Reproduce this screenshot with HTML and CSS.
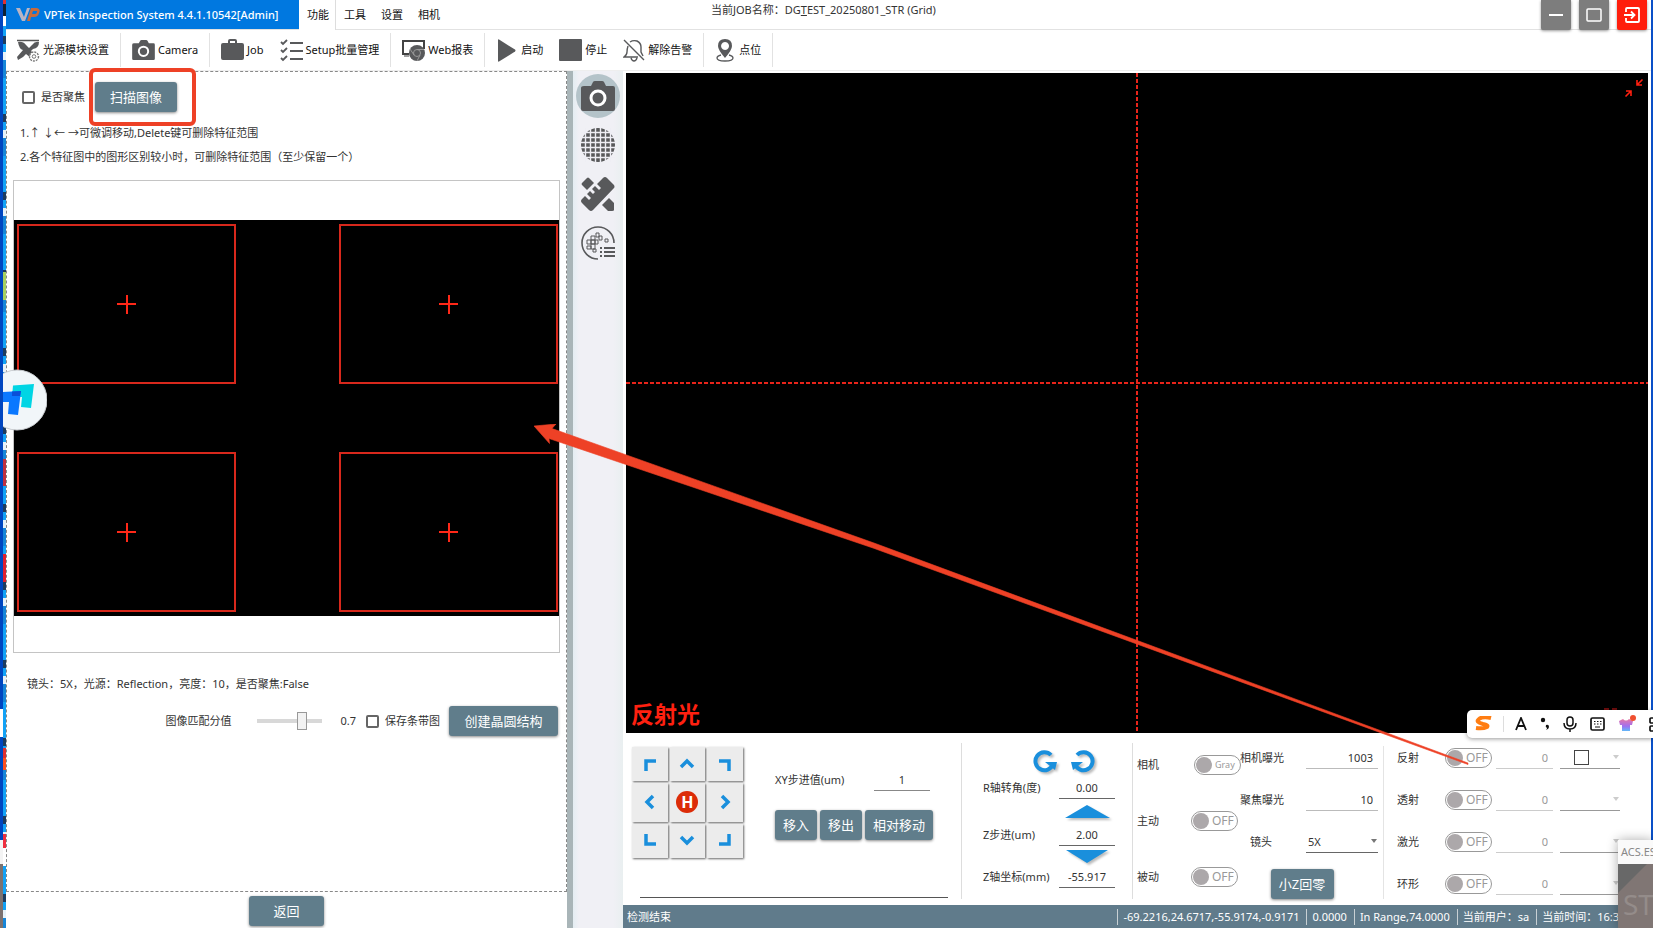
FILE: index.html
```html
<!DOCTYPE html>
<html lang="zh-CN">
<head>
<meta charset="utf-8">
<title>VPTek Inspection System</title>
<link rel="stylesheet" href="styles.css">
</head>
<body>
<svg width="0" height="0" class="defs" aria-hidden="true">
  <symbol id="i-cam" viewBox="0 0 34 30"><path d="M3 5h7l2-4q.5-1 2-1h7q1.500 0 2 1l2 4h7q2 0 2 2v21q0 2-2 2H2q-2 0-2-2V7q0-2 3-2z" fill="#58595b"/><circle cx="17" cy="17" r="7" fill="#58595b" stroke="#fff" stroke-width="3"/></symbol>
  <symbol id="i-rot" viewBox="0 0 26 26"><path d="M19 6A9 9 0 1 0 21 15" fill="none" stroke="#1a8fdc" stroke-width="4"/><path d="M13 13h12l-2 8z" fill="#1a8fdc"/></symbol>
</svg>

<div class="desktop">
  <div class="edge edge-left"></div>
  <div class="app">
    <header class="titlebar">
      <div class="brand">
        <svg width="24" height="15" viewBox="0 0 24 15"><path d="M0 1h4l4 9 3-9h3L9 14H6z" fill="#b9b4c4"/><path d="M11 14l4-13h6q4 1 2 5-1 4-5 4h-3l-1 4zM16 7h3q2 0 2-3h-4z" fill="#c86a3c" fill-rule="evenodd"/></svg>
        <span>VPTek Inspection System 4.4.1.10542[Admin]</span>
      </div>
      <nav class="tabs">
        <a href="#" class="tab active">功能</a><a href="#" class="tab">工具</a><a href="#" class="tab">设置</a><a href="#" class="tab">相机</a>
      </nav>
      <p class="job">当前JOB名称：DG<u>T</u>EST_20250801_STR (Grid)</p>
      <div class="winbtns">
        <button class="win" aria-label="最小化"><svg width="18" height="18" viewBox="0 0 18 18"><path d="M2 9h14" stroke="#fff" stroke-width="2"/></svg></button>
        <button class="win" aria-label="最大化"><svg width="18" height="18" viewBox="0 0 18 18"><rect x="2" y="3" width="14" height="12" rx="1" fill="none" stroke="#fff" stroke-width="1.500"/></svg></button>
        <button class="win exit" aria-label="退出"><svg width="18" height="18" viewBox="0 0 18 18" fill="none" stroke="#fff" stroke-width="1.800"><path d="M3 6V3q0-1 1-1h11q1 0 1 1v12q0 1-1 1H4q-1 0-1-1v-3M1 9h10M8 5.500 11.500 9 8 12.500"/></svg></button>
      </div>
    </header>

    <div class="toolbar">
      <div class="group">
        <button class="tool"><svg width="23" height="23" viewBox="0 0 23 23"><path d="M0 1.500h22" stroke="#555" stroke-width="1.500"/><path d="M1 3q5-1 8 3l3 3 3-3q3-4 7-3 0 6-6 7l-2 2 3 3-3 4-5-4-3 3-5 3-1-3 6-7Q2 10 1 3z" fill="#58595b"/><circle cx="17" cy="17.500" r="4.500" fill="#fff" stroke="#777" stroke-width="1.400" stroke-dasharray="2 1"/><circle cx="17" cy="17.500" r="1.800" fill="none" stroke="#777"/></svg>光源模块设置</button>
      </div>
      <div class="group">
        <button class="tool"><svg width="23" height="20"><use href="#i-cam"/></svg>Camera</button>
      </div>
      <div class="group">
        <button class="tool"><svg width="23" height="22" viewBox="0 0 23 22"><path d="M7 4V2q0-2 2-2h5q2 0 2 2v2h5q2 0 2 2v13q0 2-2 2H2q-2 0-2-2V6q0-2 2-2zM9 4h5V2H9z" fill="#58595b" fill-rule="evenodd"/></svg>Job</button>
        <button class="tool"><svg width="23" height="23" viewBox="0 0 23 23" fill="none" stroke="#58595b"><path d="M10 4h13M10 12h13M10 20h13" stroke-width="2"/><path d="M1 3l2 2 4-4M1 11l2 2 4-4M1 19l2 2 4-4" stroke-width="1.800"/></svg>Setup批量管理</button>
      </div>
      <div class="group">
        <button class="tool"><svg width="23" height="23" viewBox="0 0 23 23"><path d="M7 15H1V2h21v8" fill="none" stroke="#444" stroke-width="2"/><path d="M2 17h5" stroke="#444"/><circle cx="15" cy="14" r="8" fill="#58595b"/><circle cx="15" cy="14" r="3.500" fill="#58595b" stroke="#999"/><path d="M15 10.500h7M12 16l-4-6M18 16l-3 6" stroke="#999"/></svg>Web报表</button>
      </div>
      <div class="group">
        <button class="tool"><svg width="22" height="23" viewBox="0 0 22 23"><path d="M2 1q0-1 1-.5l16 10q1 1 0 2l-16 10q-1 .5-1-.5z" fill="#58595b"/></svg>启动</button>
        <button class="tool"><svg width="23" height="23" viewBox="0 0 23 23"><rect width="23" height="22" rx="1" fill="#58595b"/></svg>停止</button>
        <button class="tool"><svg width="22" height="23" viewBox="0 0 22 23" fill="none" stroke="#58595b" stroke-width="1.400"><path d="M1 1l20 20M5 7q-1 3-1 6 0 3-3 5h14M7 3q3-2 7-1 4 2 4 6v5l2 4M8 19q1 3 3 3t3-3"/></svg>解除告警</button>
      </div>
      <div class="group">
        <button class="tool"><svg width="21" height="23" viewBox="0 0 21 23"><path d="M10 0q7 0 7 7 0 4-7 12Q3 11 3 7q0-7 7-7zM10 3a4 4 0 1 0 .1 0z" fill="#58595b" fill-rule="evenodd"/><path d="M6 16q-4 1-4 3 0 3 8 3t8-3q0-2-4-3" fill="none" stroke="#58595b" stroke-width="1.300"/></svg>点位</button>
      </div>
    </div>

    <main class="work">
      <section class="left">
        <div class="panel">
          <div class="scanrow">
            <label class="check"><input type="checkbox">是否聚焦</label>
            <button class="btn scan">扫描图像</button>
            <span class="callout"></span>
          </div>
          <p class="hint">1.↑ ↓← →可微调移动,Delete键可删除特征范围</p>
          <p class="hint">2.各个特征图中的图形区别较小时，可删除特征范围（至少保留一个）</p>
          <div class="preview">
            <div class="stage">
              <div class="roi"></div><div class="roi"></div><div class="roi"></div><div class="roi"></div>
            </div>
          </div>
          <p class="info">镜头：5X，光源：Reflection，亮度：10，是否聚焦:False</p>
          <div class="matchrow">
            <label for="score">图像匹配分值</label>
            <input id="score" class="slider" type="range" min="0" max="100" value="72">
            <output for="score">0.7</output>
            <label class="check"><input type="checkbox">保存条带图</label>
            <button class="btn create">创建晶圆结构</button>
          </div>
        </div>
        <div class="backrow"><button class="btn back">返回</button></div>
      </section>

      <div class="splitter"></div>

      <aside class="rail">
        <button class="railbtn on" aria-label="相机"><svg width="34" height="30"><use href="#i-cam"/></svg></button>
        <button class="railbtn" aria-label="网格"><svg width="34" height="34" viewBox="0 0 34 34"><circle cx="17" cy="17" r="17" fill="#58595b"/><path d="M4.500 0v34M9.500 0v34M14.500 0v34M19.500 0v34M24.500 0v34M29.500 0v34M0 4.500h34M0 9.500h34M0 14.500h34M0 19.500h34M0 24.500h34M0 29.500h34" stroke="#eeeef4" stroke-width="1.400"/></svg></button>
        <button class="railbtn" aria-label="测量"><svg width="34" height="34" viewBox="0 0 34 34"><g fill="#58595b"><path d="M6 1q1-1 2 0l5 5-7 7-5-5q-1-1 0-2z"/><path d="M22 1q2-2 4 0l7 7q1 2 0 3L12 33q-2 2-4 0l-7-7q-2-2 0-4l3-3 4 4 2-2-4-4 3-3 3 3 2-2-3-3 3-3 4 4 2-2-4-4z"/><path d="M21 28l7-7 5 5v7q0 1-2 1h-4z"/></g></svg></button>
        <button class="railbtn" aria-label="晶圆"><svg width="34" height="34" viewBox="0 0 34 34" fill="none" stroke="#58595b"><path d="M17 33A16 16 0 1 1 33 17" stroke-width="1.600"/><path d="M10 10h4v4h-4zM6 14h4v4H6zM10 14h4v4h-4zM14 14h3v4h-3zM6 20h4v3H6zM10 18h4v5h-4zM12 23h3v3h-3zM15 7h3v4h-3zM18 10h3v4h-3zM24 13h3v3h-3z"/><path d="M23 22h11M23 26h11M23 30h11M19 22h2M19 26h2M19 30h2" stroke-width="2"/></svg></button>
      </aside>

      <section class="right">
        <div class="view">
          <span class="lamp">反射光</span>
          <svg class="shrink" width="20" height="20" viewBox="0 0 20 20" fill="none" stroke="#ff2010" stroke-width="1.600"><path d="M18.500 1.500 13 7M13 2v5h5M1.500 18.500 7 13M2 13h5v5"/></svg>
          <svg class="marks" width="14" height="3" viewBox="0 0 14 3"><path d="M0 1h5M8 1h5" stroke="#d81818"/></svg>
        </div>

        <div class="controls">
          <div class="stage-ctl">
            <div class="pad">
              <button aria-label="左上"><svg width="18" height="18"><path d="M5 16V6h10"/></svg></button>
              <button aria-label="上"><svg width="16" height="14"><path d="M2 10l6-6 6 6"/></svg></button>
              <button aria-label="右上"><svg width="18" height="18"><path d="M3 6h10v10"/></svg></button>
              <button aria-label="左"><svg width="14" height="16"><path d="M10 2L4 8l6 6"/></svg></button>
              <button class="home" aria-label="归位"><span>H</span></button>
              <button aria-label="右"><svg width="14" height="16"><path d="M4 2l6 6-6 6"/></svg></button>
              <button aria-label="左下"><svg width="18" height="18"><path d="M5 2v10h10"/></svg></button>
              <button aria-label="下"><svg width="16" height="14"><path d="M2 3l6 6 6-6"/></svg></button>
              <button aria-label="右下"><svg width="18" height="18"><path d="M3 12h10V2"/></svg></button>
            </div>
            <div class="xy">
              <div class="xyrow"><label for="xy">XY步进值(um)</label><input id="xy" class="field center" value="1"></div>
              <div class="moves"><button class="btn">移入</button><button class="btn">移出</button><button class="btn">相对移动</button></div>
            </div>
            <div class="rule"></div>
          </div>

          <div class="rz">
            <div class="rot">
              <button class="plain" aria-label="逆时针"><svg width="26" height="26"><use href="#i-rot"/></svg></button>
              <button class="plain flip" aria-label="顺时针"><svg width="26" height="26"><use href="#i-rot"/></svg></button>
            </div>
            <label for="r">R轴转角(度)</label><input id="r" class="field center dark" value="0.00">
            <button class="plain tri" aria-label="上升"><svg width="45" height="13"><path d="M0 13 22 0l23 13z" fill="#1a8fdc"/></svg></button>
            <label for="zs">Z步进(um)</label><input id="zs" class="field center dark" value="2.00">
            <button class="plain tri" aria-label="下降"><svg width="45" height="13"><path d="M1 0h42L22 13z" fill="#1a8fdc"/></svg></button>
            <label for="z">Z轴坐标(mm)</label><input id="z" class="field center dark" value="-55.917">
          </div>

          <div class="cam">
            <div class="modes">
              <div class="mode"><span>相机</span><label class="toggle shift"><input type="checkbox"><span class="small">Gray</span></label></div>
              <div class="mode"><span>主动</span><label class="toggle"><input type="checkbox"><span>OFF</span></label></div>
              <div class="mode"><span>被动</span><label class="toggle"><input type="checkbox"><span>OFF</span></label></div>
            </div>
            <div class="expo">
              <div class="exrow"><label for="e1">相机曝光</label><input id="e1" class="field" value="1003"></div>
              <div class="exrow"><label for="e2">聚焦曝光</label><input id="e2" class="field" value="10"></div>
              <div class="exrow"><label for="lens" class="lens">镜头</label><div class="pick dark"><select id="lens"><option>5X</option></select></div></div>
              <div class="exrow end"><button class="btn zero">小Z回零</button></div>
            </div>
          </div>

          <div class="lights">
            <div class="light"><span>反射</span><label class="toggle"><input type="checkbox"><span>OFF</span></label><input class="field dim" value="0" aria-label="反射亮度"><div class="pick faint"><select aria-label="反射通道"><option></option></select><i class="square"></i></div></div>
            <div class="light"><span>透射</span><label class="toggle"><input type="checkbox"><span>OFF</span></label><input class="field dim" value="0" aria-label="透射亮度"><div class="pick faint"><select aria-label="透射通道"><option></option></select></div></div>
            <div class="light"><span>激光</span><label class="toggle"><input type="checkbox"><span>OFF</span></label><input class="field dim" value="0" aria-label="激光亮度"><div class="pick faint"><select aria-label="激光通道"><option></option></select></div></div>
            <div class="light"><span>环形</span><label class="toggle"><input type="checkbox"><span>OFF</span></label><input class="field dim" value="0" aria-label="环形亮度"><div class="pick faint"><select aria-label="环形通道"><option></option></select></div></div>
          </div>
        </div>

        <footer class="status">
          <span class="state">检测结束</span>
          <span>-69.2216,24.6717,-55.9174,-0.9171</span>
          <span>0.0000</span>
          <span>In Range,74.0000</span>
          <span>当前用户：sa</span>
          <span>当前时间：16:3</span>
        </footer>
      </section>
    </main>
  </div>
  <div class="edge edge-right"></div>

  <div class="bubble"><svg width="44" height="62" viewBox="0 0 44 62"><circle cx="14" cy="31" r="30" fill="#f1f6f9" stroke="#c8ccd0"/><path d="M10 16.500 31 15l-3 24-10-1 1-10H9z" fill="#00d5e4"/><path d="M-2 23l20-1-3 24-10-1 1-12h-8z" fill="#0a78ff"/><path d="M9 22.500l9-.5-1 5H9z" fill="#0b4fd8"/></svg></div>

  <svg class="arrow" width="936" height="342" viewBox="0 0 936 342"><path d="M0 2 22 0l-4 4.500L340 119 934 339v1.500L339 124 15 14.500l.5 5z" fill="#ee4126" stroke="#ee4126" stroke-width=".6"/></svg>

  <div class="ime">
    <svg width="18" height="16" viewBox="0 0 18 16"><path d="M16 2Q8 0 4 3T8 8q6 1 4 3-4 2-11 1" fill="none" stroke="#ff7d12" stroke-width="4"/></svg>
    <i class="bar"></i>
    <svg width="12" height="14" viewBox="0 0 12 14" fill="none" stroke="#111" stroke-width="1.800"><path d="M1 13 6 1l5 12M3 9h6"/></svg>
    <svg width="10" height="14" viewBox="0 0 10 14"><circle cx="3" cy="3" r="2.200" fill="#111"/><path d="M6 8q3-1 3 2 0 2-3 3 1-1 1-2-2-1-1-3z" fill="#111"/></svg>
    <svg width="14" height="16" viewBox="0 0 14 16" fill="none" stroke="#111" stroke-width="1.500"><rect x="4" y="1" width="6" height="9" rx="3"/><path d="M1 7q0 6 6 6t6-6M7 13v3"/></svg>
    <svg width="15" height="14" viewBox="0 0 15 14" fill="none" stroke="#111"><rect x="1" y="1" width="13" height="12" rx="1.500" stroke-width="1.700"/><path d="M4 4.500h8M4 7h8" stroke-dasharray="1.500 1.500"/><path d="M5 10h5"/></svg>
    <svg width="18" height="18" viewBox="0 0 18 18"><defs><linearGradient id="shirt" x1="0" y1="0" x2="0" y2="1"><stop offset="0" stop-color="#e878a8"/><stop offset=".6" stop-color="#a070f0"/><stop offset="1" stop-color="#60b8f8"/></linearGradient></defs><path d="M1 6l4-2q3 3 6 0l4 2-1 4h-2v6H4v-6H2z" fill="url(#shirt)"/><circle cx="15" cy="3" r="3" fill="#f05030"/></svg>
    <svg width="13" height="15" viewBox="0 0 13 15" fill="none" stroke="#111" stroke-width="1.700"><rect x="1" y="1" width="5" height="5" rx="1"/><rect x="1" y="9" width="5" height="5" rx="1"/><rect x="9" y="1" width="5" height="5" rx="1"/><rect x="9" y="9" width="5" height="5" rx="1"/></svg>
  </div>

  <div class="acs"><div class="acs-title">ACS.ES</div><div class="acs-body">ST</div></div>
</div>
</body>
</html>
```
FILE: styles.css
```css
* { box-sizing: border-box; }
body {
  margin: 0;
  font: 11px/16px "Noto Sans", "Noto Sans CJK SC", sans-serif;
  color: #333;
  background: #fff;
}
p { margin: 0; }
a { color: inherit; text-decoration: none; }
button, input, select { font: inherit; color: inherit; }
button { border: 0; padding: 0; background: none; cursor: pointer; }
svg { flex: none; display: block; }
.defs { position: absolute; }

.desktop { position: relative; display: flex; min-height: 100vh; overflow: hidden; }
.edge { flex: none; }
.edge-left {
  width: 6px;
  background:
    linear-gradient(#fff, #fff) 0 709px / 3px 28px no-repeat,
    linear-gradient(#f4f4f4 0 24px, #7c7270 0) 0 840px / 3px 88px no-repeat,
    linear-gradient(#0046c0, #0046c0) 0 0 / 3px 100% no-repeat,
    linear-gradient(transparent 748px, #e03030 0 758px, #ff5020 0 770px, transparent 0 834px, #f03040 0 848px, #fff 0 866px, transparent 0),
    linear-gradient(transparent 459px, #c03040 0 486px, transparent 0 554px, #e02030 0 582px, transparent 0),
    linear-gradient(#e03030 0 4px, #123 0 16px, #fff 0 26px, transparent 0 272px, #a8d060 0 300px, transparent 0),
    repeating-linear-gradient(#12a2f6 0 36px, #1c3c60 0 44px, #12a2f6 0 52px, #e8f2f8 0 60px, #1686d8 0 78px);
}
.edge-right { width: 2px; background: #0a50c8; }
.app { flex: 1; min-width: 0; display: flex; flex-direction: column; }

.titlebar { display: flex; height: 30px; border-bottom: 1px solid #e2e2e2; position: relative; }
.brand { display: flex; align-items: center; gap: 4px; width: 293px; padding-left: 10px; background: #0078e0; color: #fff; white-space: nowrap; font-weight: 500; }
.tabs { display: flex; color: #111; }
.tab { padding: 7px 7px 0 8px; }
.tab.active { border-right: 1px solid #ddd; background: #fff; margin-bottom: -1px; padding: 7px 6px 0 8px; }
.job { flex: 1; padding: 2px 0 0 264px; }
.winbtns { display: flex; gap: 8px; padding-right: 4px; }
.win { width: 30px; height: 30px; display: grid; place-items: center; background: #7d7d7d; border-radius: 0 0 2px 2px; box-shadow: 0 1px 3px #0006; }
.win.exit { background: #ff1e0c; }

.toolbar { display: flex; height: 40px; align-items: center; color: #111; }
.group { display: flex; gap: 16px; padding: 0 11px; height: 34px; border-right: 1px solid #e2e2e2; }
.tool { display: flex; align-items: center; gap: 3px; white-space: nowrap; }

.work { flex: 1; display: flex; border-top: 1px solid #eee; }
.left { width: 561px; flex: none; display: flex; flex-direction: column; }
.panel { flex: 1; border: 1px dashed #888; padding: 10px 6px 0; }
.backrow { height: 36px; display: flex; justify-content: center; align-items: flex-start; padding: 4px 0 0; }
.btn { height: 30px; padding: 0 8px; border-radius: 3px; background: #607d8b; color: #fff; font-size: 13px; line-height: 18px; white-space: nowrap; box-shadow: 0 1px 3px #0007; }
.back { width: 75px; }
.scanrow { position: relative; display: flex; align-items: center; gap: 10px; padding-left: 9px; height: 30px; }
.callout { position: absolute; left: 76px; top: -14px; width: 107px; height: 58px; border: 4px solid #ee4126; border-radius: 6px; }
.check { display: flex; align-items: center; gap: 6px; white-space: nowrap; }
.check input { appearance: none; width: 13px; height: 13px; margin: 0; border: 2px solid #666; border-radius: 2px; background: #fff; }
.scan { width: 82px; }
.hint { padding-left: 7px; margin-top: 8px; }
.scanrow + .hint { margin-top: 13px; }
.preview { margin-top: 15px; padding: 39px 0 36px; border: 1px solid #c4c4c4; }
.stage { display: grid; grid-template-columns: 1fr 1fr; gap: 68px 103px; padding: 4px 1px 4px 3px; background: #000; }
.roi {
  height: 160px;
  border: 2px solid #d8281c;
  background:
    linear-gradient(#ff2818, #ff2818) center / 19px 2px no-repeat,
    linear-gradient(#ff2818, #ff2818) center / 2px 19px no-repeat;
}
.info { margin-top: 23px; padding-left: 14px; }
.matchrow { display: flex; align-items: center; justify-content: flex-end; margin-top: 14px; padding-right: 2px; }
.matchrow output { margin: 0 10px 0 18px; }
.slider { appearance: none; width: 65px; height: 18px; margin: 0 0 0 26px; background: linear-gradient(#d8d8d8, #d8d8d8) center / 100% 4px no-repeat; }
.slider::-webkit-slider-thumb { appearance: none; width: 10px; height: 18px; background: #f2f2f2; border: 1px solid #999; }
.create { width: 109px; margin-left: 9px; }

.splitter { width: 6px; flex: none; background: #a9b5b8; }
.rail { width: 50px; flex: none; display: flex; flex-direction: column; align-items: center; gap: 5px; padding-top: 3px; background: linear-gradient(90deg, #e4edf2, #f0f0f5 6px 40px, #e9eff0); }
.railbtn { width: 44px; height: 44px; border-radius: 50%; display: grid; place-items: center; }
.railbtn.on { background: #b4c3c9; }

.right { flex: 1; min-width: 0; display: flex; flex-direction: column; }
.view {
  position: relative;
  flex: 1;
  margin: 2px 3px 0;
  background:
    repeating-linear-gradient(90deg, #e8241a 0 4px, transparent 0 6px) 0 309px / 100% 2px no-repeat,
    repeating-linear-gradient(#e8241a 0 4px, transparent 0 6px) 50% 0 / 2px 100% no-repeat,
    #000;
}
.lamp { position: absolute; left: 5px; bottom: 4px; font-size: 23px; line-height: 30px; font-weight: 700; color: #ff2010; }
.shrink { position: absolute; right: 4px; top: 5px; }
.marks { position: absolute; right: 30px; bottom: 22px; }

.controls { display: flex; height: 172px; justify-content: space-between; }
.field { border: 0; border-bottom: 1px solid #bbb; background: none; padding: 0 5px 0 0; height: 22px; width: 72px; text-align: right; outline: 0; border-radius: 0; }
.field.center { width: 56px; padding: 0; text-align: center; border-color: #888; }
.field.dark { border-color: #666; }
.field.dim { color: #999; width: 57px; border-color: #ccc; margin-left: 4px; }

.stage-ctl { flex: 1; display: grid; grid-template-columns: 111px 1fr; column-gap: 32px; align-content: start; padding: 14px 13px 0 9px; }
.pad { display: grid; grid-template-columns: repeat(3, 1fr); gap: 2px; height: 111px; }
.pad button { display: grid; place-items: center; background: #ececec; box-shadow: 1px 1px 2px #0009; }
.pad path { fill: none; stroke: #1a8fdc; stroke-width: 3.500; }
.home span { width: 22px; height: 22px; border-radius: 50%; background: #dc2c08; color: #fff; font-size: 16px; font-weight: 700; line-height: 22px; }
.xyrow { display: flex; align-items: center; justify-content: space-between; width: 155px; margin-top: 22px; }
.moves { display: flex; gap: 3px; margin-top: 19px; }
.rule { grid-column: 1 / 3; margin-top: 39px; margin-left: 8px; border-bottom: 1px solid #555; }

.rz { width: 171px; flex: none; margin: 10px 0 6px; padding: 4px 0 0 21px; border-left: 1px solid #ddd; display: grid; grid-template-columns: 76px 57px; grid-template-rows: 30px 22px 25px 22px 20px 22px; align-items: center; white-space: nowrap; }
.rot { grid-column: 1 / 3; display: flex; gap: 12px; padding-left: 49px; align-items: center; }
.plain { filter: drop-shadow(2px 2px 1px #0004); }
.flip svg { transform: scaleX(-1); }
.tri { grid-column: 2; justify-self: center; }

.cam { width: 251px; flex: none; display: flex; margin: 10px 0 6px; border-left: 1px solid #ddd; }
.modes { width: 105px; margin-top: -6px; padding-left: 4px; flex: none; }
.mode { height: 56px; display: flex; align-items: center; justify-content: space-between; white-space: nowrap; }
.toggle { display: flex; align-items: center; width: 47px; height: 20px; border: 1px solid #999; border-radius: 10px; color: #999; font-size: 12px; gap: 3px; padding-left: 1px; background: #fff; }
.toggle input { appearance: none; width: 16px; height: 16px; margin: 0; border-radius: 50%; background: #aca8aa; flex: none; }
.small { font-size: 9px; }
.shift { margin-right: -3px; }
.expo { flex: 1; margin-top: -6px; padding: 0 5px 0 2px; }
.exrow { height: 42px; display: flex; align-items: center; justify-content: space-between; }
.exrow.end { justify-content: center; padding-right: 14px; }
.lens { padding-left: 10px; }
.zero { width: 63px; }
.pick { position: relative; width: 72px; height: 22px; border-bottom: 1px solid #666; }
.pick select { appearance: none; width: 100%; height: 100%; border: 0; background: none; outline: 0; padding: 0 2px; }
.pick::after { content: ""; position: absolute; right: 1px; top: 8px; border: 3px solid transparent; border-top: 4px solid #777; border-bottom: 0; pointer-events: none; }
.pick.faint { width: 60px; margin-left: 7px; border-color: #999; }
.pick.faint::after { border-top-color: #ccc; }
.square { position: absolute; left: 14px; top: 3px; width: 15px; height: 15px; border: 1px solid #444; pointer-events: none; }

.lights { width: 268px; flex: none; margin: 13px 0 6px; padding: 0 0 0 13px; border-left: 1px solid #e4e4e4; }
.light { height: 42px; display: flex; align-items: center; }
.light:first-child { margin-top: -9px; }
.light > span { width: 48px; }

.status { height: 23px; display: flex; align-items: center; padding: 0 25px 0 4px; background: #607b8b; color: #fff; white-space: nowrap; }
.status span { padding: 0 7px 0 5px; border-left: 1px solid #c8d0d4; line-height: 16px; }
.status .state { flex: 1; border: 0; padding: 0; }

.bubble { position: absolute; left: 3px; top: 369px; }
.bubble svg { overflow: hidden; }
.arrow { position: absolute; left: 534px; top: 424px; pointer-events: none; }
.ime { position: absolute; right: 0; top: 710px; width: 186px; height: 28px; display: flex; align-items: center; gap: 13px; padding-left: 8px; background: #fff; border-radius: 5px 0 0 5px; box-shadow: 0 1px 4px #0006; overflow: hidden; }
.bar { flex: none; width: 1px; height: 16px; background: #ddd; margin: 0 -2px 0 -3px; }
.acs { position: absolute; right: 0; bottom: 0; width: 35px; height: 88px; overflow: hidden; background: #fafafa; color: #888; box-shadow: 0 0 12px #0005; }
.acs-title { height: 24px; padding: 4px 0 0 3px; }
.acs-body { height: 64px; padding: 20px 0 0 5px; font-size: 28px; line-height: 40px; background: linear-gradient(135deg, #686868 20px, #807674 21px); color: #948c8a; }
```
